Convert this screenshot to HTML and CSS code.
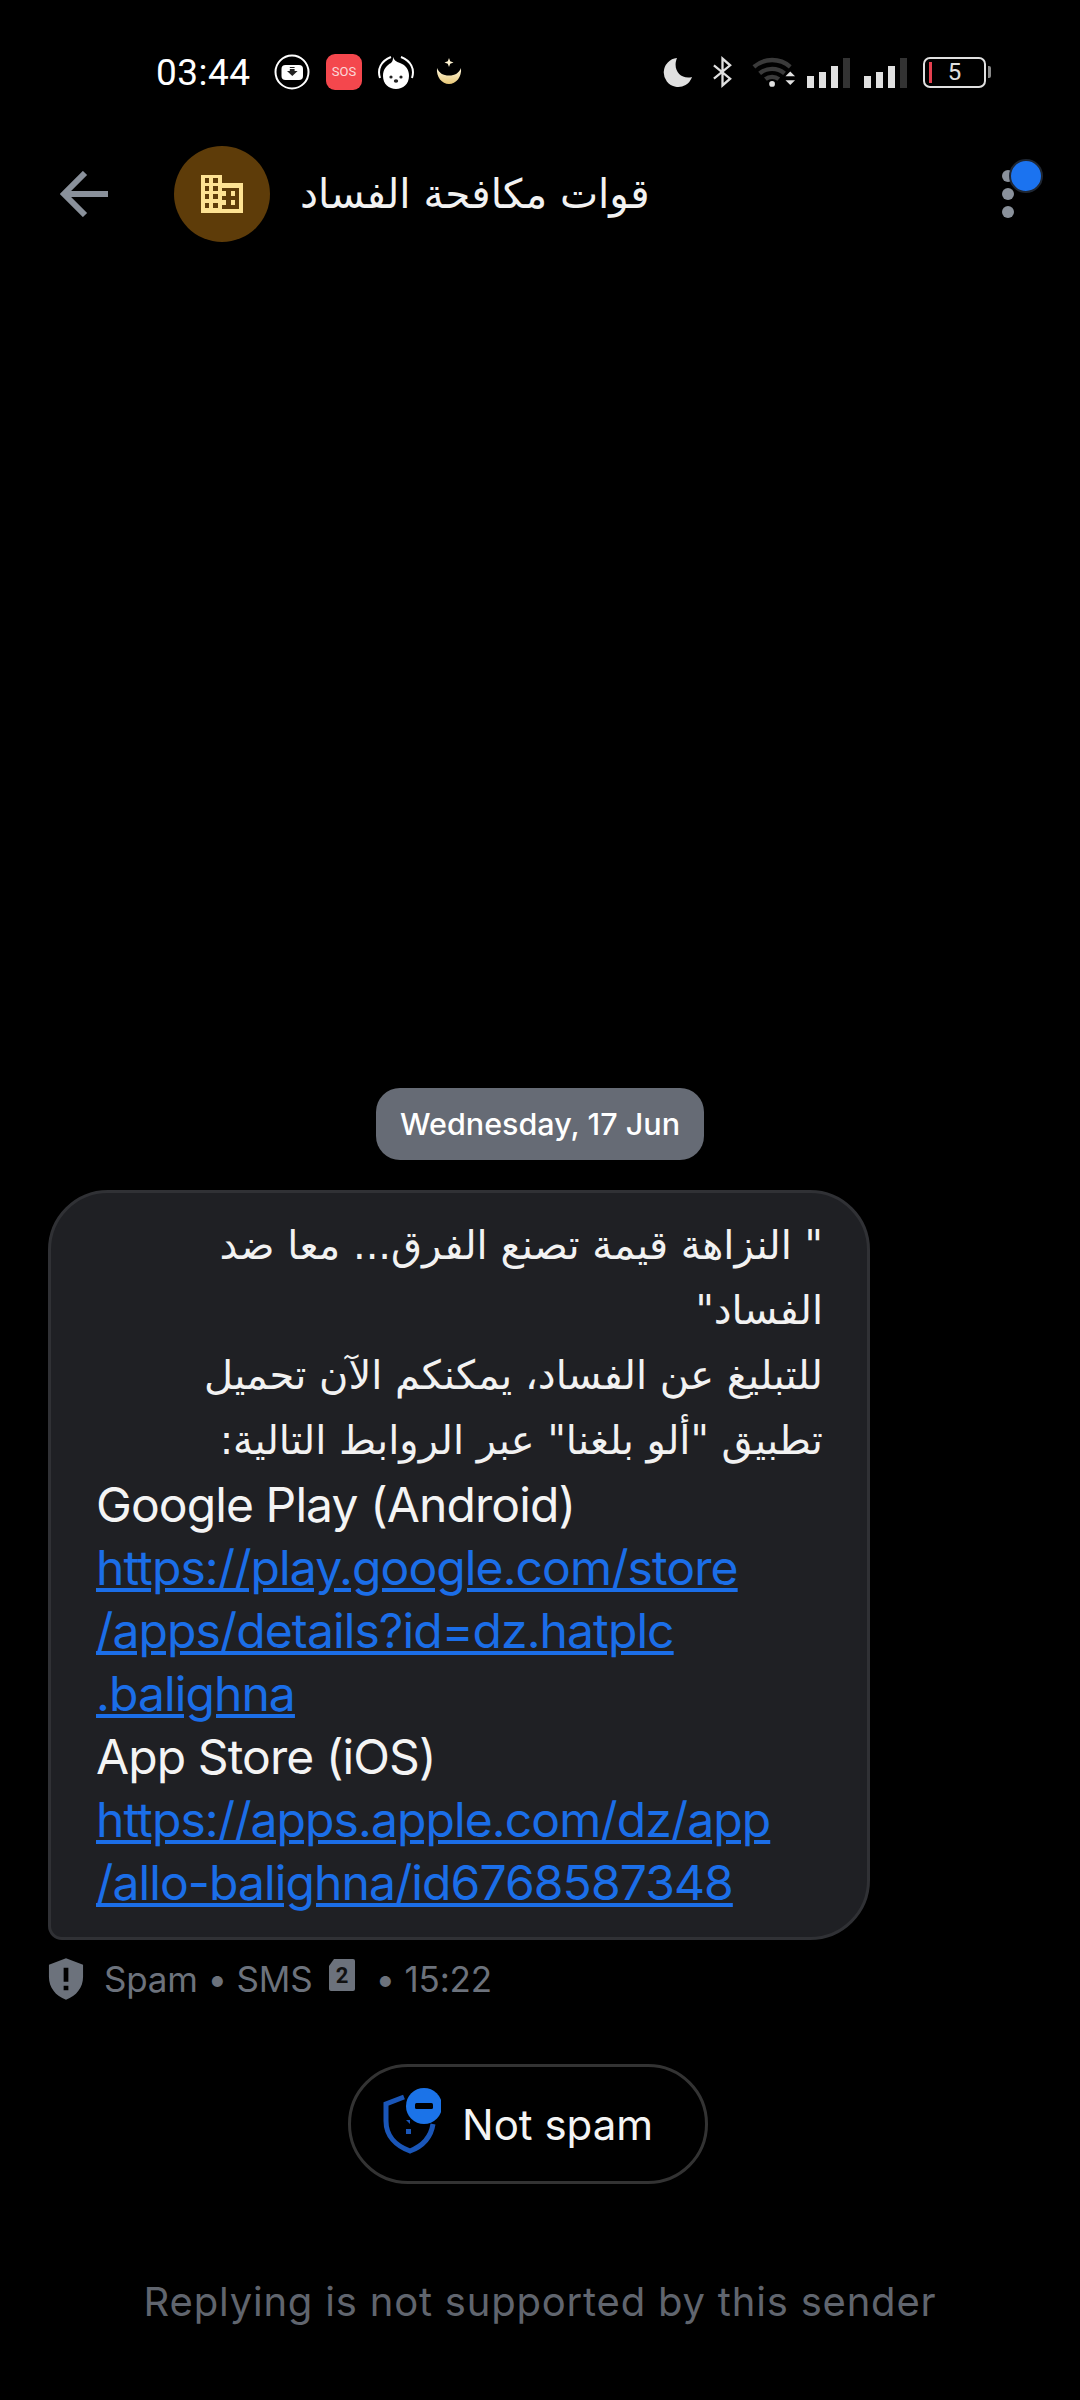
FILE: index.html
```html
<!DOCTYPE html>
<html lang="en">
<head>
  <meta charset="UTF-8">
  <meta name="viewport" content="width=device-width, initial-scale=1.0">
  <title>Messages</title>
  <link rel="stylesheet" href="styles.css">
</head>
<body>
  <div class="screen">
    <!-- Status bar -->
    <div class="status-bar">
      <div class="status-left">
        <span class="clock">03:44</span>
        <svg class="st-icon" width="36" height="36" viewBox="0 0 36 36">
          <circle cx="18" cy="18" r="16.500" fill="none" stroke="#fff" stroke-width="2"/>
          <rect x="7.500" y="11" width="21.500" height="15" rx="4" fill="#fff"/>
          <path d="M15.800 13h4.800v1h-4.800zM15.800 15h4.800v2h3l-5.300 5-5.300-5h2.800z" fill="#222"/>
        </svg>
        <span class="sos">SOS</span>
        <svg class="st-icon" width="36" height="36" viewBox="0 0 36 36">
          <path d="M2 24C-1 15 3 7 13 3" fill="none" stroke="#fff" stroke-width="2"/>
          <path d="M34 24C37 15 33 7 23 3" fill="none" stroke="#fff" stroke-width="2"/>
          <path d="M15 3c1 3 3 5 7 6 6 2 9 7 9 13 0 8-6 13-13 13S5 30 5 22c0-7 4-11 8-13 2-2 2-4 2-6z" fill="#fff"/>
          <circle cx="13" cy="23" r="1.600" fill="#222"/>
          <circle cx="23" cy="23" r="1.600" fill="#222"/>
          <ellipse cx="18" cy="27" rx="2.200" ry="1.800" fill="#222"/>
        </svg>
        <svg class="moon-gold" width="26" height="28" viewBox="0 0 26 28">
          <defs>
            <linearGradient id="gold" x1="0" y1="0" x2="0" y2="1">
              <stop offset="0" stop-color="#fff8e0"/>
              <stop offset="1" stop-color="#e9c877"/>
            </linearGradient>
          </defs>
          <path d="M13 0l1.200 3.300 3.300 1.200-3.300 1.200L13 9l-1.200-3.300-3.300-1.200 3.300-1.200z" fill="#fff4d2"/>
          <path d="M1 10c2 5 6 7.500 12 7.500S23 15 25 10c1 9-5 16-12 16S0 19 1 10z" fill="url(#gold)"/>
        </svg>
      </div>
      <div class="status-right">
        <svg width="30" height="30" viewBox="0 0 30 30">
          <path d="M14 1a14.500 14.500 0 1 0 15 19C18 23 9 13 14 1z" fill="#e0e0e0"/>
        </svg>
        <svg class="bt" width="21" height="32" viewBox="0 0 22 32">
          <path d="M2 9l17 14-8 7V2l8 7L2 23" fill="none" stroke="#e0e0e0" stroke-width="2.400"/>
        </svg>
        <svg class="wifi" width="44" height="33" viewBox="0 0 46 34">
          <path d="M2 11a29 29 0 0 1 38 0" fill="none" stroke="#3a3a3a" stroke-width="4.500"/>
          <path d="M8 18a20 20 0 0 1 26 0" fill="none" stroke="#3a3a3a" stroke-width="4.500"/>
          <path d="M14 24a11 11 0 0 1 14 0" fill="none" stroke="#3a3a3a" stroke-width="4.500"/>
          <circle cx="21" cy="29" r="3" fill="#e0e0e0"/>
          <path d="M35 21l5-5 5 5zM35 25h10l-5 5z" fill="#e0e0e0"/>
        </svg>
        <div class="signal">
          <i class="bar b1"></i><i class="bar b2"></i><i class="bar b3"></i><i class="bar b4"></i>
        </div>
        <div class="signal second">
          <i class="bar b1"></i><i class="bar b2"></i><i class="bar b3"></i><i class="bar b4"></i>
        </div>
        <div class="battery">
          <div class="battery-body"><i class="battery-level"></i><span>5</span></div>
          <i class="battery-tip"></i>
        </div>
      </div>
    </div>

    <!-- Conversation header -->
    <div class="top-bar">
      <svg class="back" width="50" height="46" viewBox="0 0 50 46">
        <path d="M48 23H5M25 2L4 23l21 21" fill="none" stroke="#8a919b" stroke-width="6"/>
      </svg>
      <div class="avatar">
        <svg width="42" height="38" viewBox="0 0 42 38">
          <path fill-rule="evenodd" fill="#fde293" d="M0 0h21v8h21v30H0zM4 3v5h4V3zM12 3v5h5V3zM4 11v5h4v-5zM12 11v5h5v-5zM4 19v5h4v-5zM12 19v5h5v-5zM4 28v5h4v-5zM12 28v5h5v-5zM21 13v21h17V13z"/>
          <path fill="#fde293" d="M21 16h4v5h-4zM21 25h4v5h-4zM30 16h4v5h-4zM30 25h4v5h-4z"/>
        </svg>
      </div>
      <h1 class="sender" dir="rtl">قوات مكافحة الفساد</h1>
      <div class="menu">
        <i class="dot"></i><i class="dot"></i><i class="dot"></i>
        <i class="menu-badge"></i>
      </div>
    </div>

    <!-- Messages -->
    <div class="thread">
      <div class="date-row"><span class="date-chip">Wednesday, 17 Jun</span></div>
      <div class="bubble">
        <p class="msg-ar" dir="rtl">" النزاهة قيمة تصنع الفرق... معا ضد الفساد"<br>للتبليغ عن الفساد، يمكنكم الآن تحميل تطبيق "ألو بلغنا" عبر الروابط التالية:</p>
        <p class="msg-en">Google Play (Android)<br>
          <a href="#">https://play.google.com/store<br>/apps/details?id=dz.hatplc<br>.balighna</a><br>
          App Store (iOS)<br>
          <a href="#">https://apps.apple.com/dz/app<br>/allo-balighna/id6768587348</a></p>
      </div>
      <div class="meta">
        <svg width="36" height="44" viewBox="0 0 38 44">
          <path fill-rule="evenodd" fill="#6c727c" d="M19 0l18 7v13c0 11-7 20-18 24C8 40 1 31 1 20V7zM16.500 10v15h5V10zM16.500 29v5h5v-5z"/>
        </svg>
        <span class="meta-text">Spam • SMS</span>
        <svg class="sim" width="26" height="32" viewBox="0 0 26 32">
          <path d="M5 0h19a2 2 0 0 1 2 2v28a2 2 0 0 1-2 2H2a2 2 0 0 1-2-2V7z" fill="#6c727c"/>
          <text x="13" y="24" text-anchor="middle" class="sim-num">2</text>
        </svg>
        <span class="meta-text">• 15:22</span>
      </div>
      <div class="action-row">
        <button class="not-spam">
          <span class="ns-icon">
            <svg width="58" height="66" viewBox="0 0 58 66">
              <path d="M21 9L3 16v17c0 15 10 25 24 30 13-5 21-14 23-27" fill="none" stroke="#1a56b8" stroke-width="5"/>
              <path d="M23 32l4 4v-4zM23 41h5v5h-5z" fill="#1a56b8"/>
              <circle cx="41" cy="18" r="18" fill="#1b73e8"/>
              <rect x="32" y="15" width="18" height="6" rx="1.500" fill="#000"/>
            </svg>
          </span>
          Not spam
        </button>
      </div>
    </div>

    <div class="reply-note">Replying is not supported by this sender</div>
  </div>
</body>
</html>
```

FILE: styles.css
```css
* {
  box-sizing: border-box;
}

body {
  margin: 0;
  background: #000;
  font-family: "Inter", "Liberation Sans", "DejaVu Sans", sans-serif;
  color: #fff;
}

.screen {
  width: 1080px;
  height: 2400px;
  display: flex;
  flex-direction: column;
  overflow: hidden;
}

.status-bar {
  height: 144px;
  padding: 48px 89px 0 156px;
  display: flex;
  justify-content: space-between;
  align-items: flex-start;
}

.status-left {
  display: flex;
  align-items: center;
  gap: 16px;
  height: 48px;
}

.clock {
  width: 94px;
  margin-right: 8px;
  font-family: "Roboto", sans-serif;
  font-size: 37px;
  letter-spacing: 0.5px;
}

.sos {
  width: 36px;
  height: 36px;
  border-radius: 9px;
  background: #f4474d;
  color: #fbd9d9;
  font-family: "Roboto", sans-serif;
  font-size: 13px;
  line-height: 36px;
  text-align: center;
}

.moon-gold {
  margin-left: 6px;
}

.status-right {
  display: flex;
  align-items: center;
  height: 48px;
}

.bt {
  margin-left: 19px;
}

.wifi {
  margin-left: 19px;
  margin-right: 11px;
}

.signal {
  display: flex;
  align-items: flex-end;
  gap: 5px;
  height: 30px;
  margin-top: 2px;
}

.signal.second {
  margin-left: 14px;
  margin-right: 16px;
}

.bar {
  width: 7px;
  background: #e0e0e0;
}

.b1 { height: 12px; }
.b2 { height: 16px; }
.b3 { height: 22px; }
.b4 { height: 30px; background: #333; }

.battery {
  display: flex;
  align-items: center;
  gap: 2px;
}

.battery-body {
  width: 63px;
  height: 31px;
  border: 2px solid #e0e0e0;
  border-radius: 7px;
  display: flex;
  align-items: center;
  justify-content: center;
  position: relative;
  font-family: "Roboto", sans-serif;
  font-size: 24px;
  color: #e0e0e0;
}

.battery-level {
  position: absolute;
  left: 4px;
  top: 3px;
  width: 3px;
  height: 21px;
  background: #e5404f;
}

.battery-tip {
  width: 3px;
  height: 12px;
  background: #8a8a8a;
  border-radius: 0 2px 2px 0;
}

.top-bar {
  height: 96px;
  margin-top: 2px;
  padding: 0 28px 0 60px;
  display: flex;
  align-items: center;
}

.back {
  flex: none;
}

.avatar {
  width: 96px;
  height: 96px;
  margin-left: 64px;
  border-radius: 50%;
  background: #5e3c09;
  display: flex;
  align-items: center;
  justify-content: center;
}

.sender {
  margin: 0 0 0 30px;
  font-family: "DejaVu Sans", sans-serif;
  font-size: 40.500px;
  font-weight: 400;
  color: #f2f2f2;
}

.menu {
  margin-left: auto;
  width: 50px;
  display: flex;
  flex-direction: column;
  gap: 6px;
  position: relative;
}

.dot {
  width: 12px;
  height: 12px;
  border-radius: 50%;
  background: #8a919b;
}

.menu-badge {
  position: absolute;
  left: 7px;
  top: -11px;
  width: 34px;
  height: 34px;
  border-radius: 50%;
  background: #1b73f0;
  border: 2px solid #1f2733;
}

.thread {
  flex: 1;
  display: flex;
  flex-direction: column;
  justify-content: flex-end;
  padding: 0 0 98px 48px;
}

.date-row {
  width: 984px;
  display: flex;
  justify-content: center;
  margin-bottom: 30px;
}

.date-chip {
  height: 72px;
  padding: 0 24px;
  border-radius: 24px;
  background: #666b75;
  font-size: 30.500px;
  font-weight: 500;
  line-height: 72px;
  color: #fff;
}

.bubble {
  width: 822px;
  height: 750px;
  padding: 20px 44px 0 45px;
  background: #1f2024;
  border: 3px solid #303135;
  border-radius: 60px 60px 60px 14px;
}

.bubble p {
  margin: 0;
}

.msg-ar {
  font-family: "DejaVu Sans", sans-serif;
  font-size: 40px;
  line-height: 65px;
  color: #f2f2f2;
}

.msg-en {
  font-family: "Inter", "Liberation Sans", sans-serif;
  font-size: 48px;
  line-height: 63px;
  letter-spacing: -0.9px;
  color: #f4f4f4;
}

.msg-en a {
  color: #1b6ee8;
  text-decoration: underline;
}

.meta {
  display: flex;
  align-items: center;
  gap: 20px;
  margin-top: 17px;
  color: #6c727c;
}

.meta-text {
  font-size: 35px;
  letter-spacing: -0.2px;
  font-family: "Inter", sans-serif;
}

.sim {
  margin: -8px 0 0 -3px;
}

.sim-num {
  font-family: "Roboto", sans-serif;
  font-size: 22px;
  font-weight: 700;
  fill: #111;
}

.action-row {
  width: 960px;
  display: flex;
  justify-content: center;
  margin-top: 63px;
}

.not-spam {
  width: 360px;
  height: 120px;
  border: 3px solid #333;
  border-radius: 60px;
  background: transparent;
  color: #f4f4f4;
  font-family: "Inter", sans-serif;
  font-size: 42px;
  display: flex;
  align-items: center;
  gap: 21px;
  padding: 0 0 0 32px;
}

.ns-icon {
  display: flex;
  margin-top: -6px;
}

.reply-note {
  text-align: center;
  height: 118px;
  font-size: 40px;
  color: #60656e;
  letter-spacing: 0.8px;
  line-height: 40px;
}
```
